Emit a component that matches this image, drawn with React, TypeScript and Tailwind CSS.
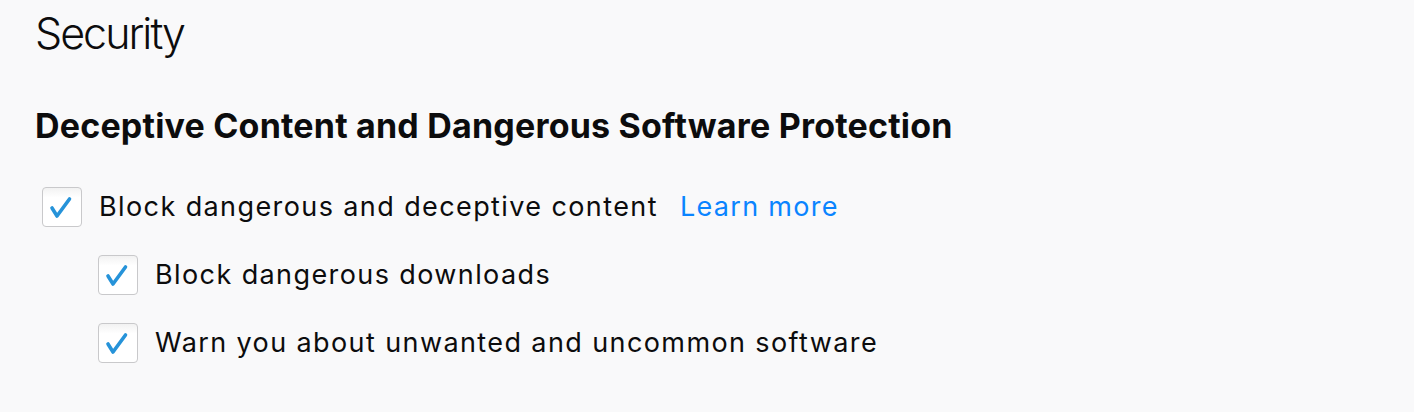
import React from 'react';

function Check() {
  return (
    <span className="block h-[40px] w-[40px] shrink-0 rounded-[4px] border-[1.5px] border-[#c9c9cb] bg-gradient-to-b from-[#f2f2f2] to-white to-[25%]">
      <svg width="37" height="37" viewBox="0 0 37 37" fill="none">
        <path d="M9 20 L14 28 L26.5 11" stroke="#2693d9" strokeWidth="3.6" strokeLinecap="round" strokeLinejoin="round" />
      </svg>
    </span>
  );
}

function Option({ label, nested, link }: { label: string; nested?: boolean; link?: string }) {
  return (
    <label className={`flex h-[68px] items-center gap-[17px] ${nested ? 'pl-[63px]' : 'pl-[7px]'}`}>
      <Check />
      <span className="text-[27px] tracking-[1.4px] text-[#0c0c0d]">{label}</span>
      {link && <a className="ml-[5px] text-[27px] tracking-[1.3px] text-[#0a84ff]">{link}</a>}
    </label>
  );
}

export default function App() {
  return (
    <div className="h-[412px] w-[1414px] bg-[#f9f9fa] pl-[35px] pt-[7px] font-['Inter',sans-serif] text-[#0c0c0d]">
      <h1 className="text-[43px] font-light leading-[52px] tracking-[-2px]">Security</h1>
      <h2 className="mt-[47px] text-[34px] font-bold leading-[40px] tracking-[0.2px]">Deceptive Content and Dangerous Software Protection</h2>
      <div className="mt-[27px]">
        <Option label="Block dangerous and deceptive content" link="Learn more" />
        <Option label="Block dangerous downloads" nested />
        <Option label="Warn you about unwanted and uncommon software" nested />
      </div>
    </div>
  );
}
